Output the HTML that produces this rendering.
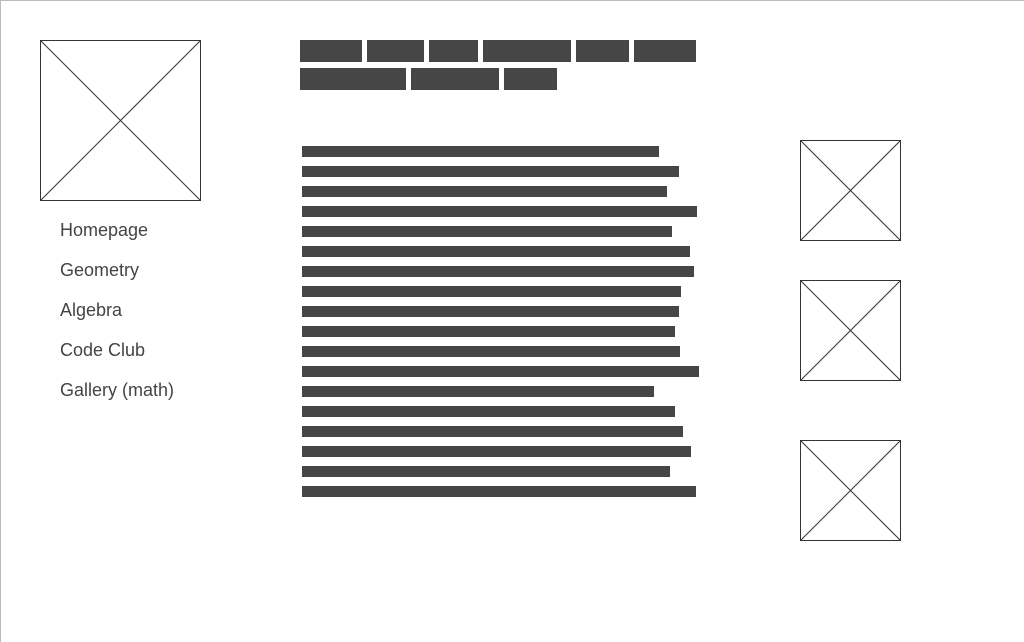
<!DOCTYPE html>
<html><head><style>
body{margin:0;width:1024px;height:642px;position:relative;background:#fff;overflow:hidden;font-family:"Liberation Sans",sans-serif}
.frame{position:absolute;left:0;top:0;width:1024px;height:642px;border-top:1px solid #bbb;border-left:1px solid #bbb;box-sizing:border-box}
.b{position:absolute;background:#464646}
.n{position:absolute;left:60px;font-size:18px;color:#444;line-height:20px}
svg{position:absolute}
</style></head><body>
<div class="frame"></div>
<svg style="left:40px;top:40px" width="161" height="161"><rect x="0.5" y="0.5" width="160" height="160" fill="none" stroke="#333"/><line x1="0" y1="0" x2="161" y2="161" stroke="#333"/><line x1="161" y1="0" x2="0" y2="161" stroke="#333"/></svg>
<svg style="left:800px;top:140px" width="101" height="101"><rect x="0.5" y="0.5" width="100" height="100" fill="none" stroke="#333"/><line x1="0" y1="0" x2="101" y2="101" stroke="#333"/><line x1="101" y1="0" x2="0" y2="101" stroke="#333"/></svg>
<svg style="left:800px;top:280px" width="101" height="101"><rect x="0.5" y="0.5" width="100" height="100" fill="none" stroke="#333"/><line x1="0" y1="0" x2="101" y2="101" stroke="#333"/><line x1="101" y1="0" x2="0" y2="101" stroke="#333"/></svg>
<svg style="left:800px;top:440px" width="101" height="101"><rect x="0.5" y="0.5" width="100" height="100" fill="none" stroke="#333"/><line x1="0" y1="0" x2="101" y2="101" stroke="#333"/><line x1="101" y1="0" x2="0" y2="101" stroke="#333"/></svg>
<div class="n" style="top:220px">Homepage</div>
<div class="n" style="top:260px">Geometry</div>
<div class="n" style="top:300px">Algebra</div>
<div class="n" style="top:340px">Code Club</div>
<div class="n" style="top:380px">Gallery (math)</div>
<div class="b" style="left:300px;top:40px;width:62px;height:22px"></div>
<div class="b" style="left:367px;top:40px;width:57px;height:22px"></div>
<div class="b" style="left:429px;top:40px;width:49px;height:22px"></div>
<div class="b" style="left:483px;top:40px;width:88px;height:22px"></div>
<div class="b" style="left:576px;top:40px;width:53px;height:22px"></div>
<div class="b" style="left:634px;top:40px;width:62px;height:22px"></div>
<div class="b" style="left:300px;top:68px;width:106px;height:22px"></div>
<div class="b" style="left:411px;top:68px;width:88px;height:22px"></div>
<div class="b" style="left:504px;top:68px;width:53px;height:22px"></div>
<div class="b" style="left:302px;top:146px;width:357px;height:11px"></div>
<div class="b" style="left:302px;top:166px;width:377px;height:11px"></div>
<div class="b" style="left:302px;top:186px;width:365px;height:11px"></div>
<div class="b" style="left:302px;top:206px;width:395px;height:11px"></div>
<div class="b" style="left:302px;top:226px;width:370px;height:11px"></div>
<div class="b" style="left:302px;top:246px;width:388px;height:11px"></div>
<div class="b" style="left:302px;top:266px;width:392px;height:11px"></div>
<div class="b" style="left:302px;top:286px;width:379px;height:11px"></div>
<div class="b" style="left:302px;top:306px;width:377px;height:11px"></div>
<div class="b" style="left:302px;top:326px;width:373px;height:11px"></div>
<div class="b" style="left:302px;top:346px;width:378px;height:11px"></div>
<div class="b" style="left:302px;top:366px;width:397px;height:11px"></div>
<div class="b" style="left:302px;top:386px;width:352px;height:11px"></div>
<div class="b" style="left:302px;top:406px;width:373px;height:11px"></div>
<div class="b" style="left:302px;top:426px;width:381px;height:11px"></div>
<div class="b" style="left:302px;top:446px;width:389px;height:11px"></div>
<div class="b" style="left:302px;top:466px;width:368px;height:11px"></div>
<div class="b" style="left:302px;top:486px;width:394px;height:11px"></div>
</body></html>
